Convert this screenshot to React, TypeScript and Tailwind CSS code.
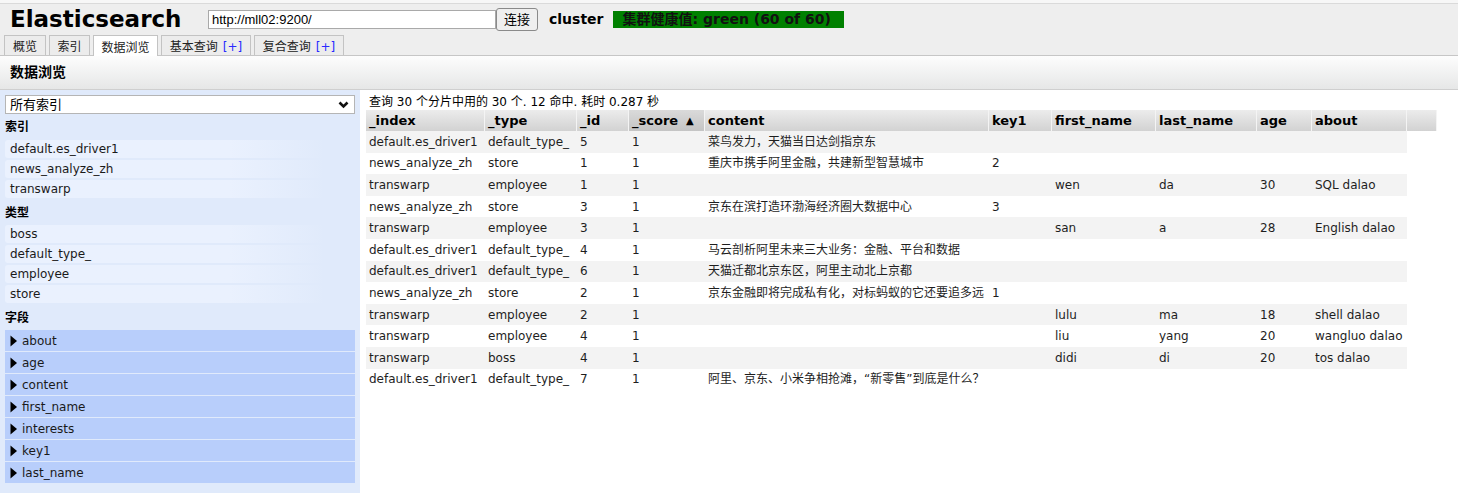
import React from "react";

const rows: string[][] = [
  ["default.es_driver1", "default_type_", "5", "1", "菜鸟发力，天猫当日达剑指京东", "", "", "", "", ""],
  ["news_analyze_zh", "store", "1", "1", "重庆市携手阿里金融，共建新型智慧城市", "2", "", "", "", ""],
  ["transwarp", "employee", "1", "1", "", "", "wen", "da", "30", "SQL dalao"],
  ["news_analyze_zh", "store", "3", "1", "京东在滨打造环渤海经济圈大数据中心", "3", "", "", "", ""],
  ["transwarp", "employee", "3", "1", "", "", "san", "a", "28", "English dalao"],
  ["default.es_driver1", "default_type_", "4", "1", "马云剖析阿里未来三大业务：金融、平台和数据", "", "", "", "", ""],
  ["default.es_driver1", "default_type_", "6", "1", "天猫迁都北京东区，阿里主动北上京都", "", "", "", "", ""],
  ["news_analyze_zh", "store", "2", "1", "京东金融即将完成私有化，对标蚂蚁的它还要追多远", "1", "", "", "", ""],
  ["transwarp", "employee", "2", "1", "", "", "lulu", "ma", "18", "shell dalao"],
  ["transwarp", "employee", "4", "1", "", "", "liu", "yang", "20", "wangluo dalao"],
  ["transwarp", "boss", "4", "1", "", "", "didi", "di", "20", "tos dalao"],
  ["default.es_driver1", "default_type_", "7", "1", "阿里、京东、小米争相抢滩，“新零售”到底是什么？", "", "", "", "", ""],
];

const columns = ["_index", "_type", "_id", "_score", "content", "key1", "first_name", "last_name", "age", "about"];

const indices = ["default.es_driver1", "news_analyze_zh", "transwarp"];
const types = ["boss", "default_type_", "employee", "store"];
const fields = ["about", "age", "content", "first_name", "interests", "key1", "last_name"];

function Tab({ label, plus, active, width }: { label: string; plus?: boolean; active?: boolean; width: string }) {
  return (
    <div
      className={`${width} flex items-center justify-center pt-[3px] border border-b-0 border-[#c3c3c3] text-[12px] ${
        active ? "bg-white h-[21px] -mb-px relative" : "bg-[#ececec] h-[20px]"
      }`}
    >
      {label}
      {plus && <span className="ml-[5px] text-[#2a2aff]">[+]</span>}
    </div>
  );
}

function SideItem({ name }: { name: string }) {
  return (
    <div className="h-[18px] mb-[2px] w-[320px] pl-[5px] flex items-center rounded-l-[3px] bg-linear-to-r from-[#eaf1fe] via-[#eaf1fe] via-70% to-transparent text-[12px] text-[#1a1a1a]">
      {name}
    </div>
  );
}

function SideLabel({ text, tall }: { text: string; tall?: boolean }) {
  return (
    <div className={`${tall ? "h-[26px]" : "h-[25px]"} flex items-center font-bold text-[12px] text-black`}>{text}</div>
  );
}

export default function App() {
  return (
    <div
      className="w-[1458px] h-[499px] overflow-hidden bg-white text-[#222]"
      style={{ fontFamily: '"DejaVu Sans", "Noto Sans CJK SC", sans-serif' }}
    >
      {/* Header */}
      <div className="pt-[3px] bg-[#f7f7f7]">
        <div className="bg-[#eeeeee] border-t border-[#dadada] border-b border-b-[#c6c6c6]">
          <div className="h-[31px] flex items-center">
            <div className="w-[208px] pl-[10px] font-bold text-[23px] text-black leading-none">Elasticsearch</div>
            <div className="w-[288px] h-[19px] bg-white border border-[#a9a9a9] flex items-center pl-[3px] text-[13px] text-black" style={{ fontFamily: '"Liberation Sans", sans-serif' }}>
              http://mll02:9200/
            </div>
            <div className="w-[42px] h-[23px] bg-[#efefef] border border-[#8a8a8a] rounded-[3px] flex items-center justify-center text-[13px] text-black">
              连接
            </div>
            <div className="ml-[11px] font-bold text-[14px] text-black">cluster</div>
            <div className="ml-[9px] w-[231px] h-[17px] bg-[#008000] flex items-center pl-[10px] font-bold text-[14px] text-[#111]">
              集群健康值: green (60 of 60)
            </div>
          </div>
          <div className="flex items-end gap-[3px] pl-[4px] h-[20px]">
            <Tab label="概览" width="w-[42px]" />
            <Tab label="索引" width="w-[41px]" />
            <Tab label="数据浏览" width="w-[65px]" active />
            <Tab label="基本查询" plus width="w-[90px]" />
            <Tab label="复合查询" plus width="w-[90px]" />
          </div>
        </div>
      </div>

      {/* Section title */}
      <div className="h-[34px] bg-linear-to-b from-[#fdfdfd] to-[#e6e7e7] border-b border-[#cfcfcf] flex items-center pl-[10px] font-bold text-[14px] text-black">
        数据浏览
      </div>

      <div className="flex">
        {/* Sidebar */}
        <div className="w-[360px] h-[403px] bg-[#e0eafb] p-[5px]">
          <div className="h-[19px] bg-white border border-[#b5b5b5] flex items-center justify-between pl-[4px] pr-[5px] text-[13px] text-black">
            <span>所有索引</span>
            <svg width="11" height="8" viewBox="0 0 11 8">
              <path d="M1.5 1.5 L5.5 5.5 L9.5 1.5" fill="none" stroke="#111" strokeWidth="2.6" />
            </svg>
          </div>
          <SideLabel text="索引" tall />
          {indices.map((n) => (
            <SideItem key={n} name={n} />
          ))}
          <SideLabel text="类型" />
          {types.map((n) => (
            <SideItem key={n} name={n} />
          ))}
          <SideLabel text="字段" />
          {fields.map((f) => (
            <div key={f} className="h-[21px] mb-[1px] bg-[#b8cefb] flex items-center pl-[5px] text-[12px] text-[#1a1a1a]">
              <svg width="8" height="12" viewBox="0 0 8 12" className="mr-[4px]">
                <polygon points="0.5,0.5 7,6 0.5,11.5" fill="#000" />
              </svg>
              {f}
            </div>
          ))}
        </div>

        {/* Results */}
        <div className="pl-[6px] pt-[4px]">
          <div className="h-[16px] pl-[3px] text-[12px] text-black flex items-center">
            查询 30 个分片中用的 30 个. 12 命中. 耗时 0.287 秒
          </div>
          <div className="grid grid-cols-[119px_92px_52px_76px_284px_63px_104px_101px_55px_95px_30px]">
            {[...columns, ""].map((c) => (
              <div
                key={c || "blank"}
                className={`h-[21px] flex items-center pl-[3px] font-bold text-[13px] text-black border-r border-r-[#f4f4f4] whitespace-nowrap ${
                  c === "_score"
                    ? "bg-linear-to-b from-[#dadada] to-[#c4c4c4]"
                    : "bg-linear-to-b from-[#ececec] to-[#d2d2d2]"
                }`}
              >
                {c}
                {c === "_score" && <span className="ml-[8px] text-[10px]">▲</span>}
              </div>
            ))}
          </div>
          <div className="w-[1041px]">
            {rows.map((r, i) => (
              <div
                key={i}
                className={`grid grid-cols-[119px_92px_52px_76px_284px_63px_104px_101px_55px_95px] h-[21.6px] ${
                  i % 2 === 0 ? "bg-[#f3f3f3]" : "bg-white"
                }`}
              >
                {r.map((v, j) => (
                  <div key={j} className="pl-[3px] flex items-center text-[12px] text-[#1e1e1e] whitespace-nowrap">
                    {v}
                  </div>
                ))}
              </div>
            ))}
          </div>
        </div>
      </div>
    </div>
  );
}
